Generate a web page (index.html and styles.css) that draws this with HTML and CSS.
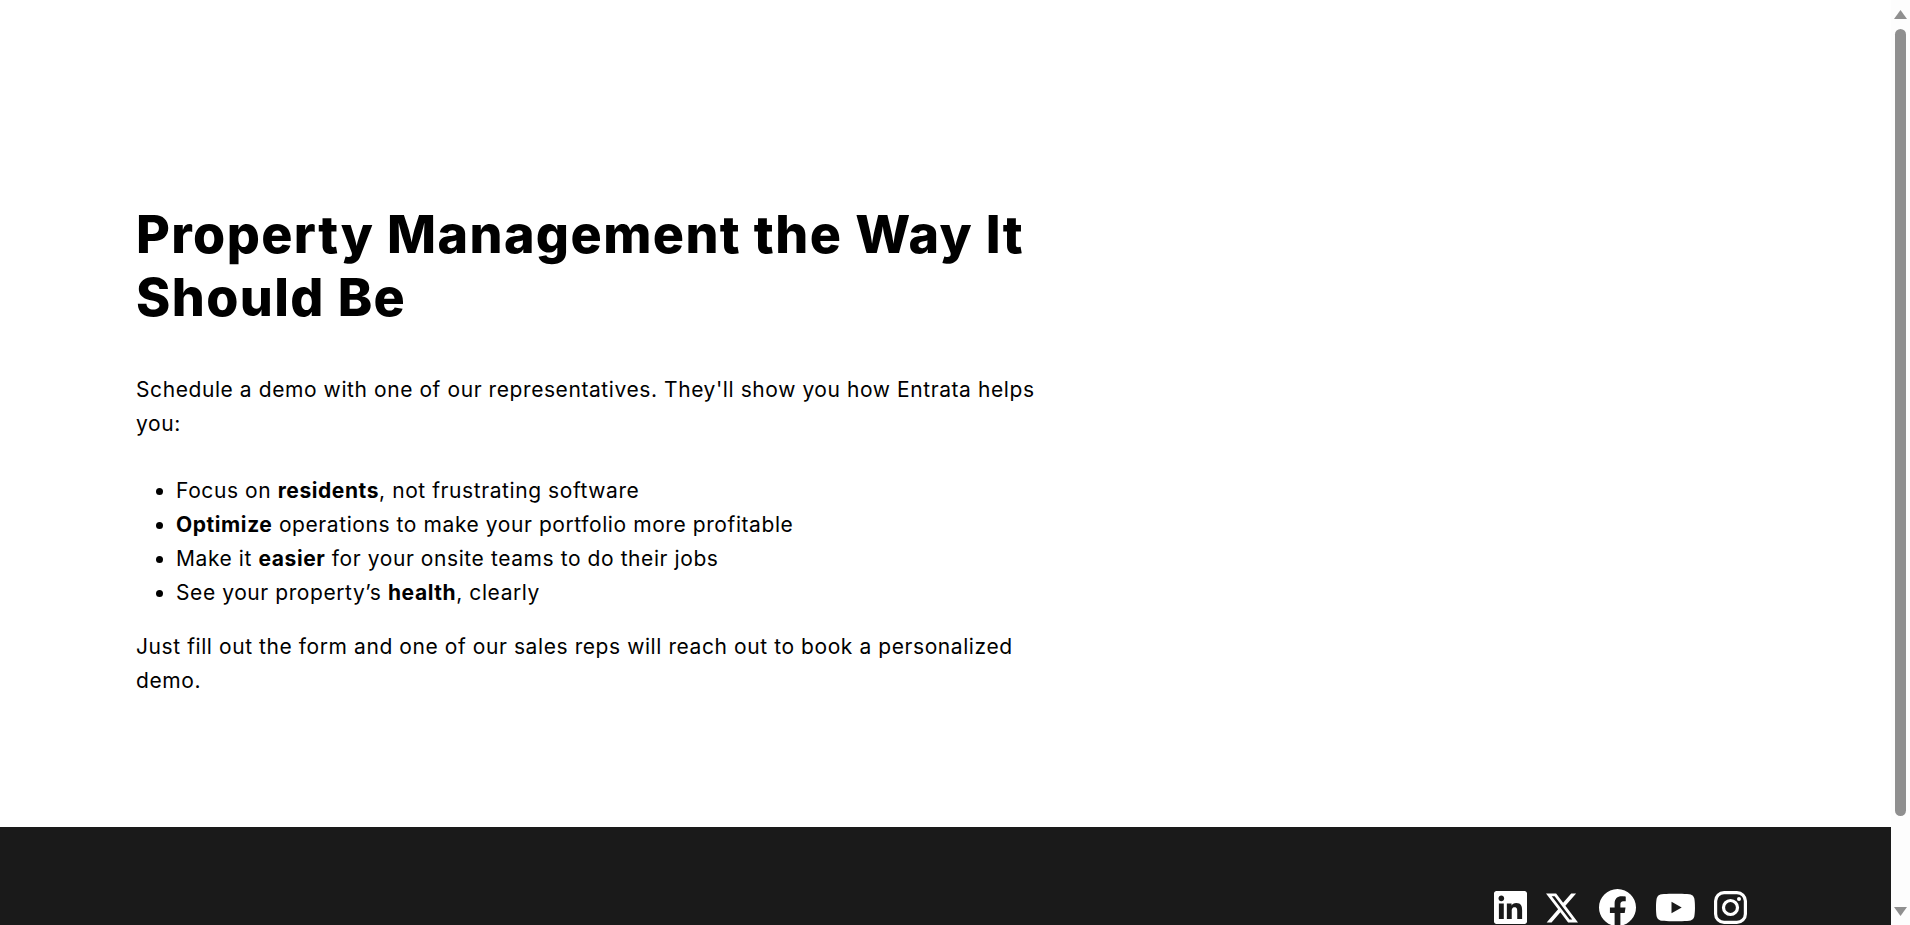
FILE: index.html
```html
<!DOCTYPE html>
<html lang="en">
<head>
    <meta charset="UTF-8">
    <meta name="viewport" content="width=device-width, initial-scale=1.0">
    <title>Schedule a Demo</title>
    <link rel="stylesheet" href="styles.css">
</head>
<body>
    <main class="hero">
        <div class="hero-copy">
            <h1>Property Management the Way It Should Be</h1>
            <p>Schedule a demo with one of our representatives. They'll show you how Entrata helps you:</p>
            <ul>
                <li>Focus on <strong>residents</strong>, not frustrating software</li>
                <li><strong>Optimize</strong> operations to make your portfolio more profitable</li>
                <li>Make it <strong>easier</strong> for your onsite teams to do their jobs</li>
                <li>See your property’s <strong>health</strong>, clearly</li>
            </ul>
            <p>Just fill out the form and one of our sales reps will reach out to book a personalized demo.</p>
        </div>
    </main>
    <footer class="footer">
        <nav class="social">
            <a href="#" aria-label="LinkedIn">
                <svg class="icon-linkedin" viewBox="0 0 24 24"><path d="M20.447 20.452h-3.554v-5.569c0-1.328-.027-3.037-1.852-3.037-1.853 0-2.136 1.445-2.136 2.939v5.667H9.351V9h3.414v1.561h.046c.477-.9 1.637-1.85 3.37-1.85 3.601 0 4.267 2.37 4.267 5.455v6.286zM5.337 7.433c-1.144 0-2.063-.926-2.063-2.065 0-1.138.92-2.063 2.063-2.063 1.14 0 2.064.925 2.064 2.063 0 1.139-.925 2.065-2.064 2.065zm1.782 13.019H3.555V9h3.564v11.452zM22.225 0H1.771C.792 0 0 .774 0 1.729v20.542C0 23.227.792 24 1.771 24h20.451C23.2 24 24 23.227 24 22.271V1.729C24 .774 23.2 0 22.222 0h.003z"/></svg>
            </a>
            <a href="#" aria-label="X">
                <svg class="icon-x" viewBox="0 0 24 24"><path d="M18.901 1.153h3.68l-8.04 9.19L24 22.846h-7.406l-5.8-7.584-6.638 7.584H.474l8.6-9.83L0 1.154h7.594l5.243 6.932ZM17.61 20.644h2.039L6.486 3.24H4.298Z"/></svg>
            </a>
            <a href="#" aria-label="Facebook">
                <svg class="icon-facebook" viewBox="0 0 24 24"><path d="M24 12.073c0-6.627-5.373-12-12-12s-12 5.373-12 12c0 5.99 4.388 10.954 10.125 11.854v-8.385H7.078v-3.47h3.047V9.43c0-3.007 1.792-4.669 4.533-4.669 1.312 0 2.686.235 2.686.235v2.953H15.83c-1.491 0-1.956.925-1.956 1.874v2.25h3.328l-.532 3.47h-2.796v8.385C19.612 23.027 24 18.062 24 12.073z"/></svg>
            </a>
            <a href="#" aria-label="YouTube">
                <svg class="icon-youtube" viewBox="0 0 24 24"><path d="M23.498 6.186a3.016 3.016 0 0 0-2.122-2.136C19.505 3.545 12 3.545 12 3.545s-7.505 0-9.377.505A3.017 3.017 0 0 0 .502 6.186C0 8.07 0 12 0 12s0 3.93.502 5.814a3.016 3.016 0 0 0 2.122 2.136c1.871.505 9.376.505 9.376.505s7.505 0 9.377-.505a3.015 3.015 0 0 0 2.122-2.136C24 15.93 24 12 24 12s0-3.93-.502-5.814zM9.545 15.568V8.432L15.818 12l-6.273 3.568z"/></svg>
            </a>
            <a href="#" aria-label="Instagram">
                <svg class="icon-instagram" viewBox="0 0 33 33"><rect x="1.6" y="1.6" width="29.8" height="29.8" rx="8.5"/><circle cx="16.5" cy="16.5" r="7"/><circle class="dot" cx="25" cy="8" r="2"/></svg>
            </a>
        </nav>
    </footer>
    <div class="scrollbar">
        <svg class="scroll-arrow" viewBox="0 0 13 9"><path d="M6.5 0 13 9H0z"/></svg>
        <div class="scroll-thumb"></div>
        <svg class="scroll-arrow" viewBox="0 0 13 9"><path d="M0 0h13L6.5 9z"/></svg>
    </div>
</body>
</html>
```

FILE: styles.css
```css
body {
    font-family: Inter, "Liberation Sans", sans-serif;
    background-color: #ffffff;
    color: #000000;
    margin: 0;
}
.hero {
    height: 827px;
    box-sizing: border-box;
    padding: 203px 0 0 136px;
}
.hero-copy {
    width: 910px;
    font-size: 21px;
    line-height: 34px;
    letter-spacing: 0.58px;
}
h1 {
    font-size: 52px;
    font-weight: 800;
    line-height: 63px;
    letter-spacing: 1.4px;
    margin: 0 0 44px;
}
p {
    margin: 0;
}
ul {
    margin: 33px 0 20px;
    padding-left: 40px;
}
strong {
    font-weight: 700;
}
.footer {
    height: 196px;
    background-color: #1a1a1a;
    box-sizing: border-box;
    padding: 61px 163px 0 0;
}
.social {
    display: flex;
    justify-content: flex-end;
    align-items: center;
    gap: 20px;
}
.social a {
    display: flex;
}
.social svg {
    fill: #ffffff;
}
.icon-linkedin {
    width: 33px;
    height: 33px;
}
.icon-x {
    width: 32px;
    height: 32px;
    margin: 0 1px 0 -1px;
}
.icon-facebook {
    width: 37px;
    height: 37px;
}
.icon-youtube {
    width: 39px;
    height: 39px;
}
.icon-instagram {
    width: 33px;
    height: 33px;
    margin-left: -1px;
}
.social .icon-instagram {
    fill: none;
    stroke: #ffffff;
    stroke-width: 3.2;
}
.social .icon-instagram .dot {
    fill: #ffffff;
    stroke: none;
}
/* window scrollbar from the screenshot */
.scrollbar {
    position: fixed;
    top: 0;
    right: 0;
    bottom: 0;
    width: 19px;
    background-color: #fdfdfd;
    box-sizing: border-box;
    padding: 10px 0 9px;
    display: flex;
    flex-direction: column;
    align-items: center;
}
.scroll-arrow {
    width: 13px;
    height: 9px;
    fill: #8f8f8f;
}
.scroll-thumb {
    width: 11px;
    flex: 1;
    margin: 10px 0 91px;
    background-color: #8f8f8f;
    border-radius: 6px;
}
```
